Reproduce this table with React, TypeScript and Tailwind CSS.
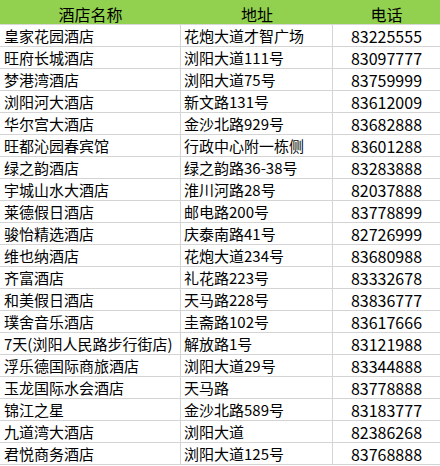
import React from "react";

const rows: [string, string, string][] = [
  ["皇家花园酒店", "花炮大道才智广场", "83225555"],
  ["旺府长城酒店", "浏阳大道111号", "83097777"],
  ["梦港湾酒店", "浏阳大道75号", "83759999"],
  ["浏阳河大酒店", "新文路131号", "83612009"],
  ["华尔宫大酒店", "金沙北路929号", "83682888"],
  ["旺都沁园春宾馆", "行政中心附一栋侧", "83601288"],
  ["绿之韵酒店", "绿之韵路36-38号", "83283888"],
  ["宇城山水大酒店", "淮川河路28号", "82037888"],
  ["莱德假日酒店", "邮电路200号", "83778899"],
  ["骏怡精选酒店", "庆泰南路41号", "82726999"],
  ["维也纳酒店", "花炮大道234号", "83680988"],
  ["齐富酒店", "礼花路223号", "83332678"],
  ["和美假日酒店", "天马路228号", "83836777"],
  ["璞舍音乐酒店", "圭斋路102号", "83617666"],
  ["7天(浏阳人民路步行街店)", "解放路1号", "83121988"],
  ["浮乐德国际商旅酒店", "浏阳大道29号", "83344888"],
  ["玉龙国际水会酒店", "天马路", "83778888"],
  ["锦江之星", "金沙北路589号", "83183777"],
  ["九道湾大酒店", "浏阳大道", "82386268"],
  ["君悦商务酒店", "浏阳大道125号", "83768888"],
];

export default function App() {
  return (
    <div
      className="w-[440px] h-[466px] bg-white text-black overflow-hidden"
      style={{ fontFamily: '"Microsoft YaHei", "Noto Sans CJK SC", "Noto Sans", sans-serif' }}
    >
      <div className="grid grid-cols-[181px_152px_107px] h-[25px] bg-[#92d050] border-b border-[#d9d9d9] text-[16px] leading-none">
        <div className="flex items-center justify-center pt-[3px]">酒店名称</div>
        <div className="flex items-center justify-center pt-[3px]">地址</div>
        <div className="flex items-center justify-center pt-[3px]">电话</div>
      </div>
      {rows.map((r, i) => (
        <div
          key={i}
          className="grid grid-cols-[181px_152px_107px] h-[22px] border-b border-[#d4d4d4] text-[15px] leading-none"
        >
          <div className="flex items-center pl-[4px] border-r border-[#d4d4d4] whitespace-nowrap overflow-hidden">
            {r[0]}
          </div>
          <div className="flex items-center pl-[3px] border-r border-[#d4d4d4] whitespace-nowrap overflow-hidden">
            {r[1]}
          </div>
          <div className="flex items-center justify-center whitespace-nowrap text-[16px] pt-[1px]">{r[2]}</div>
        </div>
      ))}
    </div>
  );
}
